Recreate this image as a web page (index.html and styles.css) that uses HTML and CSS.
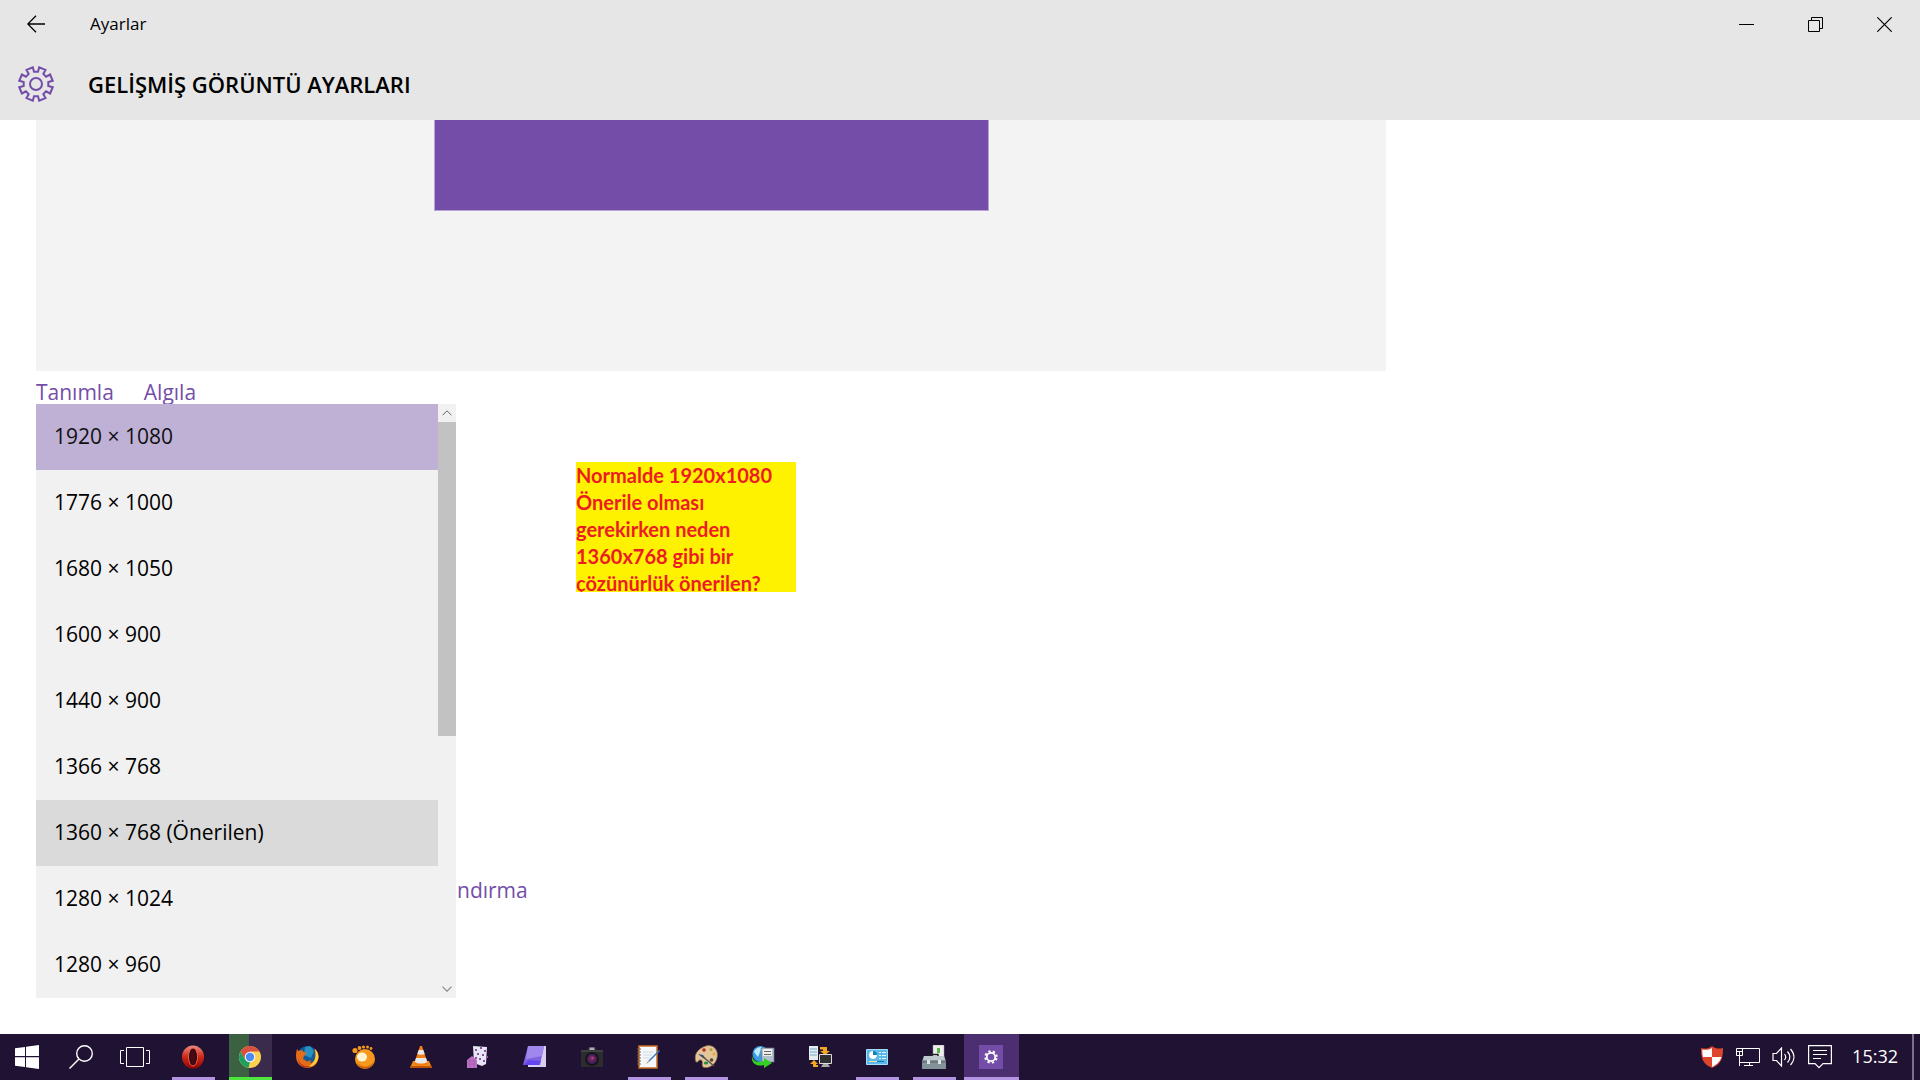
FILE: index.html
```html
<!DOCTYPE html>
<html lang="tr">
  <head>
    <meta charset="UTF-8" />
    <meta name="viewport" content="width=device-width, initial-scale=1.0" />
    <title>Ayarlar</title>
    <link rel="stylesheet" href="styles.css">
  </head>
  <body>
    <header class="header">
      <div class="titlebar">
        <button class="back" aria-label="Geri">
          <svg width="18" height="18" viewBox="0 0 18 18" fill="none" stroke="#000" stroke-width="1.3"><path d="M18 9H1M9 .8L.8 9 9 17.2"/></svg>
        </button>
        <span class="app-name">Ayarlar</span>
        <div class="window-buttons">
          <button aria-label="Simge durumuna küçült">
            <svg width="15" height="15" viewBox="0 0 15 15" stroke="#000"><path d="M0 7.5h15"/></svg>
          </button>
          <button aria-label="Önceki boyut">
            <svg width="15" height="15" viewBox="0 0 15 15" fill="none" stroke="#000"><path d="M.5 3.5h11v11H.5zM3.5 3.5v-3h11v11h-3"/></svg>
          </button>
          <button aria-label="Kapat">
            <svg width="15" height="15" viewBox="0 0 15 15" stroke="#000" stroke-width="1.2"><path d="M.3.3l14.4 14.4M14.7.3L.3 14.7"/></svg>
          </button>
        </div>
      </div>
      <div class="heading">
        <svg class="gear" width="36" height="36" viewBox="-18 -18 36 36" fill="none" stroke="#744da9" stroke-width="2">
          <path d="M-3.2-16.7L-2-12.3 2-12.3 3.2-16.7 9.5-14.1 7.3-10.1 10.1-7.3 14.1-9.5 16.7-3.2 12.3-2 12.3 2 16.7 3.2 14.1 9.5 10.1 7.3 7.3 10.1 9.5 14.1 3.2 16.7 2 12.3-2 12.3-3.2 16.7-9.5 14.1-7.3 10.1-10.1 7.3-14.1 9.5-16.7 3.2-12.3 2-12.3-2-16.7-3.2-14.1-9.5-10.1-7.3-7.3-10.1-9.5-14.1Z"/>
          <circle r="6"/>
        </svg>
        <h1>GELİŞMİŞ GÖRÜNTÜ AYARLARI</h1>
      </div>
    </header>

    <main class="content">
      <div class="preview">
        <div class="monitor"></div>
      </div>
      <div class="links">
        <a href="#">Tanımla</a>
        <a href="#">Algıla</a>
      </div>
      <div class="resolution">
        <div class="dropdown">
          <select size="9" class="options" aria-label="Çözünürlük">
            <option selected>1920 × 1080</option>
            <option>1776 × 1000</option>
            <option>1680 × 1050</option>
            <option>1600 × 900</option>
            <option>1440 × 900</option>
            <option>1366 × 768</option>
            <option class="hovered">1360 × 768 (Önerilen)</option>
            <option>1280 × 1024</option>
            <option>1280 × 960</option>
          </select>
          <div class="scrollbar">
            <button aria-label="Yukarı">
              <svg width="10" height="6" viewBox="0 0 10 6" fill="none" stroke="#666"><path d="M.5 5.3L5 .8l4.5 4.5"/></svg>
            </button>
            <div class="thumb"></div>
            <button aria-label="Aşağı">
              <svg width="10" height="6" viewBox="0 0 10 6" fill="none" stroke="#888" stroke-width="1.2"><path d="M.5.7L5 5.2 9.5.7"/></svg>
            </button>
          </div>
        </div>
        <a class="sizing" href="#">ndırma</a>
      </div>
      <p class="note">Normalde 1920x1080 Önerile olması gerekirken neden 1360x768 gibi bir çözünürlük önerilen?</p>
    </main>

    <footer class="taskbar">
      <div class="system">
        <button aria-label="Başlat">
          <svg width="24" height="24" viewBox="0 0 24 24" fill="#fff"><path d="M0 3.3L10 1.9V11H0zM11 1.7L24 0v11H11zM0 12.2h10V22L0 20.7zM11 12.2h13V24l-13-1.8z"/></svg>
        </button>
        <button aria-label="Ara">
          <svg width="24" height="24" viewBox="0 0 24 24" fill="none" stroke="#fff" stroke-width="1.4"><circle cx="15.5" cy="8.5" r="7.8"/><path d="M10 14L.5 23.5"/></svg>
        </button>
        <button aria-label="Görev Görünümü">
          <svg width="30" height="20" viewBox="0 0 30 20" fill="none" stroke="#fff"><path d="M6.5.5h17v19h-17zM4 3.5H.5v13H4M26 3.5h3.5v13H26"/></svg>
        </button>
      </div>
      <nav class="apps">
        <button class="running" aria-label="Opera">
          <svg width="24" height="24" viewBox="0 0 24 24"><defs><linearGradient id="red" x2="0" y2="1"><stop stop-color="#e98f82"/><stop offset=".5" stop-color="#cf2716"/><stop offset="1" stop-color="#8c0804"/></linearGradient></defs><ellipse cx="12" cy="12" rx="11" ry="11.5" fill="url(#red)"/><ellipse cx="12" cy="12" rx="4.5" ry="9" fill="#1d0b1d" stroke="#ff5a43"/><ellipse cx="12" cy="12" rx="2.8" ry="8" fill="#4a0a12"/></svg>
        </button>
        <button class="progress" aria-label="Chrome">
          <svg width="24" height="24" viewBox="0 0 24 24"><circle cx="12" cy="12" r="11" fill="#fdd04e"/><path d="M2.5 6.5A11 11 0 0 1 21.5 6.5H12L7.2 14.7z" fill="#d8503f"/><path d="M2.5 6.5L7.3 14.7 12 17.5l-1.4 5.4A11 11 0 0 1 2.5 6.5z" fill="#1e9f60"/><path d="M12 17.5l4.8-2.8-5 8.3h-1.2z" fill="#fdd04e"/><circle cx="12" cy="12" r="5.3" fill="#f4f4f4"/><circle cx="12" cy="12" r="4.2" fill="#4a8af4"/></svg>
        </button>
        <button aria-label="Firefox">
          <svg width="24" height="24" viewBox="0 0 24 24"><circle cx="12.5" cy="11.5" r="10.5" fill="#155a96"/><path d="M10 2l5-1 4 5-3 7-7-3z" fill="#2791c4"/><path d="M2 4l1.5 2L7 5l1.5 2L12 8l-3 3-1 3 4 2.500 4-1.500-1 3c6-1 7-9 4-14.500C23 6 24 9 23.500 13 22 27 1 26 1 11c0-3 .5-5 1-7z" fill="#e66d18"/><path d="M20 4c4 4 4.500 10 1 14-3 3-6 4-9 4 7-3 10-8 8-18z" fill="#ffd43a"/><path d="M3 13c2 8 8 9 13 8-4 3-12 2-13-8z" fill="#bd2f19"/></svg>
        </button>
        <button aria-label="GOM Player">
          <svg width="24" height="24" viewBox="0 0 24 24" fill="#f5981b"><circle cx="13" cy="14" r="10"/><circle cx="3" cy="5.5" r="2.6"/><circle cx="7.5" cy="3" r="1.9"/><circle cx="11.5" cy="2" r="1.6"/><circle cx="15.5" cy="2" r="1.5"/><circle cx="19" cy="3.5" r="1.4"/><path d="M5 17c3 6 13 7 17-1-2 9-14 11-17 1z" fill="#c85c09"/><ellipse cx="10" cy="12" rx="5" ry="4.5" fill="#fff3d2"/></svg>
        </button>
        <button aria-label="VLC">
          <svg width="24" height="24" viewBox="0 0 24 24"><path d="M4 16h16l3 7H1z" fill="#f28a17"/><path d="M1 21h22v2H1z" fill="#bd5305"/><path d="M11 1h2l6 18c-3 2-11 2-14 0z" fill="#f27d10"/><path d="M9.7 5h4.6l1.4 4c-2 1-5 1-7.4 0zM7 13h10l1.3 4c-3 2-9 2-12.6 0z" fill="#e7e9eb"/></svg>
        </button>
        <button aria-label="Solitaire">
          <svg width="24" height="24" viewBox="0 0 24 24"><path d="M7 1l14 1-1 17-4 2-8-3z" fill="#e5e8f2"/><path d="M9 4h2v2H9zM14 2h2v2h-2zM18 5h2v2h-2zM11 8h2v2h-2zM16 9h2v2h-2zM20 11h2v2h-2zM9 12h2v2H9zM13 13h2v2h-2zM17 15h2v2h-2z" fill="#9450a5"/><path d="M1 15l5-4 5 4v8H1z" fill="#bd70c6"/><path d="M2 16h8M2 19h8M4 14v9M8 14v9" stroke="#9858a5" opacity=".6"/></svg>
        </button>
        <button aria-label="Not defteri">
          <svg width="24" height="24" viewBox="0 0 24 24"><path d="M5 1h18v21H5z" fill="#d7cff1"/><path d="M5 1h16l-4 19H0z" fill="#8062df"/><path d="M5 1h16l-2 10L3 14z" fill="#a087ee"/><path d="M0 20l6-5 12 1-2 4z" fill="#6444ed"/></svg>
        </button>
        <button aria-label="Kamera">
          <svg width="24" height="24" viewBox="0 0 24 24"><path d="M1 5h6l2-3h6l2 3h6v17H1z" fill="#2c2b2e"/><path d="M9.5 2.5h5V5h-5z" fill="#aaa"/><path d="M1 6h22" stroke="#555"/><circle cx="12" cy="14" r="7" fill="#17151a"/><circle cx="12" cy="14" r="5" fill="#442060"/><circle cx="12" cy="13.5" r="2.8" fill="#7b285f"/><circle cx="12.5" cy="13" r="1" fill="#ce436a"/></svg>
        </button>
        <button class="running" aria-label="Not">
          <svg width="24" height="24" viewBox="0 0 24 24"><path d="M2 1h18v22H2z" fill="#f5f7fa" stroke="#c96e24" stroke-width="1.5"/><path d="M0 4h4M0 7h4M0 10h4M0 13h4M0 16h4M0 19h4" stroke="#776057"/><path d="M6 7h10M6 10h9M6 13h7" stroke="#ccd9e5"/><path d="M9 19l3-4L22 5l1 1-10 10z" fill="#3278c4"/><path d="M9 19l3-4 1 1z" fill="#d5b47d"/></svg>
        </button>
        <button class="running" aria-label="Paint">
          <svg width="24" height="24" viewBox="0 0 24 24"><path d="M12 1C19-1 25 5 23 13c-2 8-10 11-14 9-2-3 1-5-2-7-2-1-3 3-5 2C-1 9 5 3 12 1z" fill="#e4c59a" stroke="#997048" stroke-width=".7"/><circle cx="10" cy="5" r="1.8" fill="#b82d22"/><circle cx="17" cy="4.5" r="1.6" fill="#b69d3d"/><circle cx="20" cy="9" r="1.5" fill="#e7a83b"/><ellipse cx="12" cy="18" rx="2.2" ry="1.6" fill="#20903c"/><circle cx="17.5" cy="15" r="1.8" fill="#50483e"/><path d="M4 9l5 1 3 4-3-1z" fill="#234b88"/><path d="M8 11l12 10" stroke="#59554f" stroke-width="1.5"/></svg>
        </button>
        <button aria-label="Yedekleme">
          <svg width="24" height="24" viewBox="0 0 24 24"><circle cx="9.5" cy="9" r="8" fill="#3b9ddd"/><path d="M3 7c2-5 7-5 8-5L7 12z" fill="#b9edff"/><path d="M10 3h13v14H11z" fill="#b4bfd0" stroke="#61758c" stroke-width=".7"/><path d="M12 4h9v7h-9z" fill="#edf0ea"/><path d="M13 6.5h7M13 9.500h7" stroke="#666"/><path d="M1 11c1 5 5 7 12 5v-3l8 5-8 5v-3C5 22 0 18 1 11z" fill="#35d024"/></svg>
        </button>
        <button aria-label="Aktarım">
          <svg width="24" height="24" viewBox="0 0 24 24"><path d="M1 1h9v14H1z" fill="#e5edf0"/><path d="M2 4h7M2 7h7M2 10h7" stroke="#72a8cf"/><path d="M12 2h7v4h3l-5 4-5-4h3V4.500h-3zM10 22H5v-3H2l4-4 4 4H8v1h2z" fill="#f4a820"/><path d="M11.500 9.500h12v9h-12z" fill="#303033" stroke="#ddd"/><path d="M15 19h5l2 3h-9z" fill="#aaa"/></svg>
        </button>
        <button class="running" aria-label="Denetim Masası">
          <svg width="24" height="24" viewBox="0 0 24 24"><path d="M1.500 4.500h21v15h-21z" fill="#58b9ea" stroke="#a7ddfa"/><circle cx="8" cy="10" r="4" fill="#187ec0"/><path d="M8 10V6a4 4 0 0 0 0 8 4 4 0 0 0 4-4z" fill="#fff"/><path d="M14 7.500h2M14 10.500h2M14 13.500h2M17 7.500h4M17 10.500h4M17 13.500h4" stroke="#e6f8ff"/><path d="M4 16.500h15" stroke="#1c719f"/><path d="M4 16.500h8" stroke="#ffe1a0"/></svg>
        </button>
        <button class="running" aria-label="Araçlar">
          <svg width="24" height="24" viewBox="0 0 24 24"><path d="M11 0h11v15H11z" fill="#eee" stroke="#999" stroke-width=".5"/><path d="M15 3h3v5h-3z" fill="#57b748"/><path d="M7 12V9.500h9V12" fill="none" stroke="#202424" stroke-width="1.500"/><path d="M2 11h20l2 5v8H0v-8z" fill="#84929a"/><path d="M2 11h20l1 4H1z" fill="#bec9ce"/><path d="M0 17h24" stroke="#526069"/><path d="M5 15h3v4H5zM16 15h3v4h-3z" fill="#dde2e4"/></svg>
        </button>
        <button class="running active" aria-label="Ayarlar">
          <svg width="24" height="24" viewBox="-12 -12 24 24"><path d="M-12-12h24v24h-24z" fill="#744da9"/><circle r="4.200" fill="none" stroke="#fff" stroke-width="1.800"/><circle r="5.700" fill="none" stroke="#fff" stroke-width="2" stroke-dasharray="2.240 2.240" stroke-dashoffset="-1.120"/></svg>
        </button>
      </nav>
      <div class="tray">
        <button aria-label="Güvenlik">
          <svg width="24" height="24" viewBox="0 0 24 24"><path d="M12 1c4 3 7 3 11 2 0 9-1 16-11 20C2 19 1 12 1 3c4 1 7 1 11-2z" fill="#dd452d"/><path d="M12 12H2C3 17 7 21 12 23zM12 12h10.500c.5-3 .5-6 .5-9-4 1-7 1-11-2z" fill="#fff" opacity="0"/><path d="M12 3v9H3c-.6-2-.7-4-.7-7.500C6 5 9 5 12 3zM12 12h9.500C20 17 16 20 12 22z" fill="#fff"/></svg>
        </button>
        <button aria-label="Ağ">
          <svg width="24" height="20" viewBox="0 0 24 20" fill="none" stroke="#fff"><path d="M6 1.500h17.500v14H4M.5 1.500h6v7h-6zM3.500 4v15M.5 4.500h6M13.500 15.500v3M8 18.500h9"/></svg>
        </button>
        <button aria-label="Ses">
          <svg width="24" height="20" viewBox="0 0 24 20" fill="none" stroke="#fff" stroke-width="1.200"><path d="M1 6.500h3.500L9.500 1v18l-5-5.500H1zM12.500 7c1.600 2 1.600 4 0 6M15.500 4.500c3 3.500 3 7.500 0 11M18.500 2c4.500 5 4.500 11 0 16"/></svg>
        </button>
        <button aria-label="Bildirimler">
          <svg width="24" height="24" viewBox="0 0 24 24" fill="none" stroke="#fff" stroke-width="1.200"><path d="M.6.6h22.800v18H15l-4 4-4-4H.6zM5 5.500h14M5 9.500h14M5 13.500h8"/></svg>
        </button>
        <time class="clock">15:32</time>
        <button class="show-desktop" aria-label="Masaüstünü göster"></button>
      </div>
    </footer>
  </body>
</html>
```

FILE: styles.css
```css
* {
  box-sizing: border-box;
}

body {
  margin: 0;
  height: 100vh;
  display: flex;
  flex-direction: column;
  overflow: hidden;
  background-color: white;
  color: black;
  font-family: 'Open Sans', 'Noto Sans', sans-serif;
  font-size: 21px;
  line-height: 28px;
}

button {
  display: flex;
  justify-content: center;
  align-items: center;
  padding: 0;
  border: 0;
  background: none;
}

a {
  color: #744da9;
  text-decoration: none;
}

/* header */
.header {
  background-color: #e6e6e6;
}

.titlebar {
  height: 48px;
  display: flex;
  align-items: center;
}

.back {
  width: 72px;
  height: 48px;
}

.app-name {
  padding-left: 18px;
  font-size: 17px;
}

.window-buttons {
  display: flex;
  margin-left: auto;
  padding-right: 1px;
}

.window-buttons button {
  width: 69px;
  height: 48px;
}

.heading {
  height: 72px;
  display: flex;
  align-items: center;
  gap: 34px;
  padding: 0 18px;
}

.heading h1 {
  margin: 0;
  font-size: 22px;
  font-weight: 600;
}

/* content */
.content {
  position: relative;
  flex: 1;
  padding-left: 36px;
}

.preview {
  max-width: 1350px;
  height: 251px;
  display: flex;
  justify-content: center;
  align-items: flex-start;
  background-color: #f3f3f3;
}

.monitor {
  width: 555px;
  height: 91px;
  background-color: #744da9;
  border: 1px solid #b9a3d5;
  border-top: 0;
}

.links {
  height: 33px;
  display: flex;
  gap: 30px;
  padding-top: 7px;
}

.resolution {
  display: flex;
  align-items: flex-end;
}

.dropdown {
  position: relative;
  width: 420px;
  display: flex;
  background-color: #f1f1f1;
}

.options {
  flex: 1;
  border: 0;
  border-radius: 0;
  outline: 0;
  padding: 0;
  overflow: hidden;
  background-color: #f1f1f1;
  color: black;
  font: inherit;
}

.options option {
  padding: 18px 18px 20px;
  line-height: 28px;
}

.options option:checked {
  background: linear-gradient(#bfb0d6, #bfb0d6);
}

.options .hovered {
  background-color: #dadada;
}

.scrollbar {
  width: 18px;
  display: flex;
  flex-direction: column;
}

.scrollbar button {
  height: 18px;
}

.thumb {
  height: 314px;
  margin-bottom: auto;
  background-color: #c2c2c2;
}

.sizing {
  padding: 0 0 94px 1px;
}

.note {
  position: absolute;
  top: 342px;
  left: 576px;
  width: 220px;
  height: 130px;
  margin: 0;
  overflow: hidden;
  background-color: #fff200;
  color: #ed1c24;
  font-family: Lato, sans-serif;
  font-size: 20px;
  font-weight: bold;
  line-height: 27px;
}

/* taskbar */
.taskbar {
  height: 46px;
  display: flex;
  background-color: #1f1233;
  color: white;
}

.system,
.apps,
.tray {
  display: flex;
}

.system button {
  width: 54px;
}

.apps {
  margin-left: 3px;
}

.apps button {
  width: 43px;
  margin: 0 7px;
  padding-right: 1px;
  border-top: 3px solid transparent;
  border-bottom: 3px solid transparent;
}

.apps .running {
  border-bottom-color: #b294e2;
}

.apps .progress {
  border-top: 0;
  padding-top: 3px;
  border-bottom-color: #4ee53c;
  background: linear-gradient(to right, #3b6142 20px, #3a2a4b 20px);
}

.apps .active {
  width: 55px;
  margin: 0 1px;
  border-top-color: #4b2f70;
  background-color: #4b2f70;
}

.tray {
  margin-left: auto;
}

.tray button {
  width: 36px;
}

.clock {
  padding: 8px 14px;
  font-size: 18px;
}

.tray .show-desktop {
  width: 8px;
  border-left: 2px solid #77708a;
}
```
